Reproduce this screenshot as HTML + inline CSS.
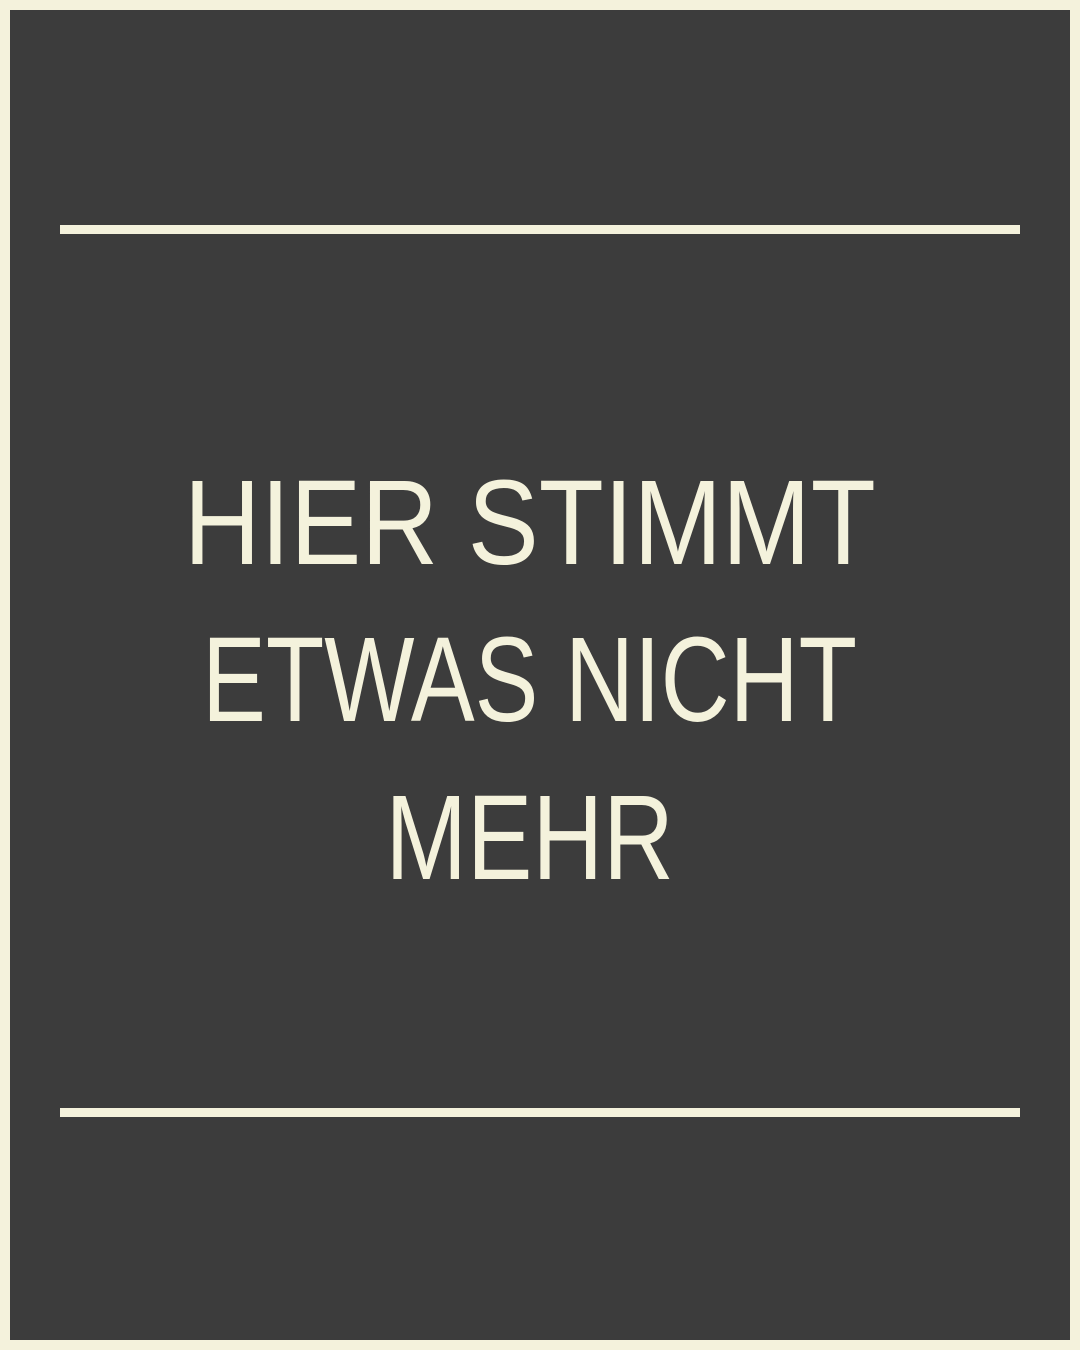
<!DOCTYPE html>
<html><head><meta charset="utf-8"><style>
html,body{margin:0;padding:0}
body{width:1080px;height:1350px;background:#f4f2dc;position:relative;overflow:hidden}
.bg{position:absolute;left:10px;top:10px;width:1060px;height:1330px;background:#3c3c3c}
.line{position:absolute;left:60px;width:960px;height:9px;background:#f4f2dc}
.t{position:absolute;left:0;width:1060px;text-align:center;font-family:"Liberation Sans",sans-serif;font-size:121px;line-height:121px;color:#f4f2dc;white-space:nowrap;transform-origin:528px 0}
</style></head><body>
<div class="bg"></div>
<div class="line" style="top:225px"></div>
<div class="line" style="top:1108px"></div>
<div class="t" style="top:462px;transform:scaleX(0.88)">HIER STIMMT</div>
<div class="t" style="top:619px;transform:scaleX(0.79)">ETWAS NICHT</div>
<div class="t" style="top:777px;transform:scaleX(0.81)">MEHR</div>
</body></html>
